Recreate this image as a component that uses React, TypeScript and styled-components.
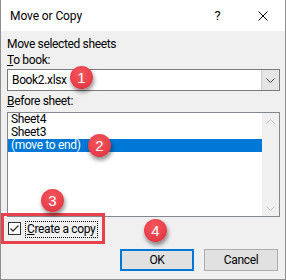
import React from "react";
import styled, { createGlobalStyle } from "styled-components";

const FONT = `"Roboto", "Liberation Sans", sans-serif`;

const GlobalStyle = createGlobalStyle`
  html, body { margin: 0; padding: 0; background: #ffffff; }
  body { font-family: ${FONT}; }
`;

const Window = styled.div`
  position: relative;
  box-sizing: border-box;
  width: 286px;
  height: 280px;
  border: 1px solid #8f8f8f;
  border-top: none;
  background: #f0f0f0;
  display: flex;
  flex-direction: column;
  font-family: ${FONT};
  font-size: 12px;
  letter-spacing: -0.35px;
  color: #000;
  overflow: hidden;
`;

const TitleBar = styled.div`
  height: 31px;
  flex-shrink: 0;
  background: #ffffff;
  display: flex;
  align-items: stretch;
`;

const Title = styled.div`
  flex: 1;
  display: flex;
  align-items: center;
  padding-left: 9px;
  font-size: 12px;
  letter-spacing: -0.1px;
`;

const CaptionButton = styled.div`
  width: 45px;
  display: flex;
  align-items: center;
  justify-content: center;
  font-size: 13px;
`;

const Body = styled.div`
  flex: 1;
  display: flex;
  flex-direction: column;
  padding: 5px 5px 0 6px;
`;

const TextLine = styled.div<{ $gap?: number }>`
  margin-top: ${(p) => p.$gap ?? 0}px;
  line-height: 16px;
  height: 16px;
  white-space: nowrap;
`;

const Combo = styled.div`
  margin-top: 1px;
  height: 22px;
  box-sizing: border-box;
  border: 1px solid #7a7a7a;
  background: #ffffff;
  display: flex;
`;

const ComboText = styled.div`
  flex: 1;
  display: flex;
  align-items: center;
  padding-left: 4px;
`;

const ComboButton = styled.div`
  width: 17px;
  background: #e5e5e5;
  border-left: 1px solid #cccccc;
  display: flex;
  align-items: center;
  justify-content: center;
`;

const ListBox = styled.div`
  margin-top: 3px;
  height: 105px;
  box-sizing: border-box;
  border: 1px solid #828790;
  background: #ffffff;
  display: flex;
`;

const Items = styled.div`
  flex: 1;
  display: flex;
  flex-direction: column;
`;

const Item = styled.div<{ $selected?: boolean }>`
  height: 13px;
  line-height: 13px;
  padding-left: 3px;
  white-space: nowrap;
  background: ${(p) => (p.$selected ? "#0078d7" : "transparent")};
  color: ${(p) => (p.$selected ? "#ffffff" : "#000000")};
`;

const ScrollBar = styled.div`
  width: 17px;
  background: #f0f0f0;
  display: flex;
  flex-direction: column;
  justify-content: space-between;
  align-items: center;
  padding: 6px 0 5px;
  box-sizing: border-box;
`;

const CheckRow = styled.div`
  margin-top: 4px;
  height: 17px;
  display: flex;
  align-items: flex-start;
  gap: 4px;
  padding-left: 1px;
`;

const CheckBox = styled.div`
  margin-top: 1px;
  width: 13px;
  height: 13px;
  box-sizing: border-box;
  border: 1px solid #333333;
  background: #ffffff;
  display: flex;
  align-items: center;
  justify-content: center;
`;

const CheckLabel = styled.div`
  height: 17px;
  line-height: 15px;
  box-sizing: border-box;
  padding: 0 2px 0 1px;
  border: 1px dotted #000000;
  white-space: nowrap;
`;

const ButtonRow = styled.div`
  margin-top: 11px;
  margin-right: 2px;
  display: flex;
  justify-content: flex-end;
  gap: 10px;
`;

const Button = styled.div<{ $default?: boolean }>`
  width: 74px;
  height: 22px;
  box-sizing: border-box;
  background: #e1e1e1;
  border: ${(p) => (p.$default ? "2px solid #0078d7" : "1px solid #adadad")};
  display: flex;
  align-items: center;
  justify-content: center;
`;

const Highlight = styled.div`
  position: absolute;
  left: 0px;
  top: 213px;
  width: 104px;
  height: 31px;
  box-sizing: border-box;
  border: 3px solid #e8414b;
  pointer-events: none;
`;

const Badge = styled.div<{ $x: number; $y: number }>`
  position: absolute;
  left: ${(p) => p.$x}px;
  top: ${(p) => p.$y}px;
  width: 23px;
  height: 23px;
  border-radius: 50%;
  background: radial-gradient(circle at 45% 35%, #f7575e 0%, #e8414b 55%, #d3313a 100%);
  box-shadow: 1px 3px 4px rgba(0, 0, 0, 0.45);
  color: #ffffff;
  font-family: "Liberation Sans", Arial, sans-serif;
  font-size: 15px;
  letter-spacing: 0;
  display: flex;
  align-items: center;
  justify-content: center;
`;

const Chevron = ({ up, color }: { up?: boolean; color: string }) => (
  <svg width="9" height="5" viewBox="0 0 9 5">
    <polyline
      points={up ? "0.5,4.5 4.5,0.5 8.5,4.5" : "0.5,0.5 4.5,4.5 8.5,0.5"}
      fill="none"
      stroke={color}
      strokeWidth="1"
    />
  </svg>
);

export default function App() {
  return (
    <>
      <GlobalStyle />
      <Window>
        <TitleBar>
          <Title>Move or Copy</Title>
          <CaptionButton>?</CaptionButton>
          <CaptionButton>
            <svg width="10" height="10" viewBox="0 0 10 10">
              <path d="M0.5 0.5 L9.5 9.5 M9.5 0.5 L0.5 9.5" stroke="#000" strokeWidth="1" />
            </svg>
          </CaptionButton>
        </TitleBar>
        <Body>
          <TextLine>Move selected sheets</TextLine>
          <TextLine>
            <u>T</u>o book:
          </TextLine>
          <Combo>
            <ComboText>Book2.xlsx</ComboText>
            <ComboButton>
              <Chevron color="#444" />
            </ComboButton>
          </Combo>
          <TextLine $gap={2}>
            <u>B</u>efore sheet:
          </TextLine>
          <ListBox>
            <Items>
              <Item>Sheet4</Item>
              <Item>Sheet3</Item>
              <Item $selected>(move to end)</Item>
            </Items>
            <ScrollBar>
              <Chevron up color="#c2c2c2" />
              <Chevron color="#c2c2c2" />
            </ScrollBar>
          </ListBox>
          <CheckRow>
            <CheckBox>
              <svg width="11" height="11" viewBox="0 0 11 11">
                <polyline points="1.5,5.5 4,8 9.5,2.5" fill="none" stroke="#333" strokeWidth="1.3" />
              </svg>
            </CheckBox>
            <CheckLabel>
              <u>C</u>reate a copy
            </CheckLabel>
          </CheckRow>
          <ButtonRow>
            <Button $default>OK</Button>
            <Button>Cancel</Button>
          </ButtonRow>
        </Body>
        <Highlight />
        <Badge $x={69} $y={66}>1</Badge>
        <Badge $x={87} $y={134}>2</Badge>
        <Badge $x={40} $y={189}>3</Badge>
        <Badge $x={143} $y={219}>4</Badge>
      </Window>
    </>
  );
}
